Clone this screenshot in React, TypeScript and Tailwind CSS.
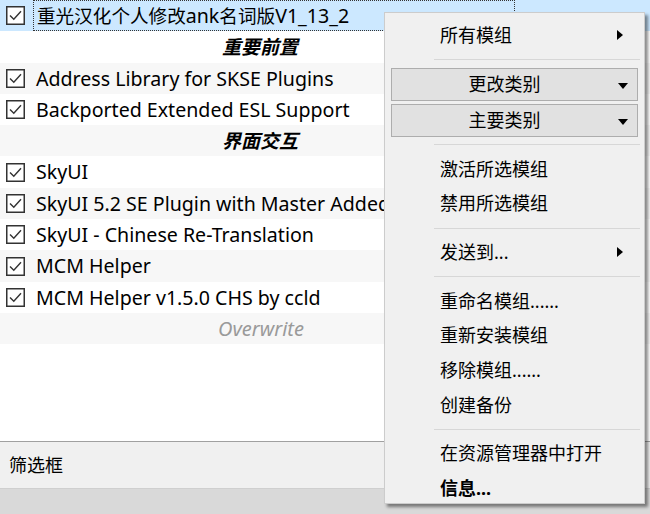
import React from "react";

type Row =
  | { kind: "mod"; name: React.ReactNode; selected?: boolean }
  | { kind: "group"; name: string }
  | { kind: "overwrite"; name: string };

const rows: Row[] = [
  {
    kind: "mod",
    name: (
      <>
        <span className="text-[18.6px]">重光汉化个人修改</span>ank<span className="text-[18.6px]">名词版</span>V1_13_2
      </>
    ),
    selected: true,
  },
  { kind: "group", name: "重要前置" },
  { kind: "mod", name: "Address Library for SKSE Plugins" },
  { kind: "mod", name: "Backported Extended ESL Support" },
  { kind: "group", name: "界面交互" },
  { kind: "mod", name: "SkyUI" },
  { kind: "mod", name: "SkyUI 5.2 SE Plugin with Master Added" },
  { kind: "mod", name: "SkyUI - Chinese Re-Translation" },
  { kind: "mod", name: "MCM Helper" },
  { kind: "mod", name: "MCM Helper v1.5.0 CHS by ccld" },
  { kind: "overwrite", name: "Overwrite" },
];

function CheckBox() {
  return (
    <svg width="19" height="19" viewBox="0 0 19 19" className="shrink-0">
      <rect x="0.75" y="0.75" width="17.5" height="17.5" fill="white" stroke="#333" strokeWidth="1.5" />
      <path d="M4 9.5 L7.8 13.3 L15 5.2" fill="none" stroke="#333" strokeWidth="1.4" />
    </svg>
  );
}

function ArrowRight() {
  return (
    <svg width="6" height="10" viewBox="0 0 6 10">
      <path d="M0 0 L6 5 L0 10 Z" fill="#000" />
    </svg>
  );
}

function ArrowDown() {
  return (
    <svg width="10" height="6" viewBox="0 0 10 6">
      <path d="M0 0 L10 0 L5 6 Z" fill="#000" />
    </svg>
  );
}

function Separator() {
  return (
    <div className="h-[14px] flex items-center pl-[49px] pr-[4px]">
      <div className="h-px w-full bg-[#d7d7d7]" />
    </div>
  );
}

function MenuItem({ label, sub, bold }: { label: string; sub?: boolean; bold?: boolean }) {
  return (
    <div className="h-[34.7px] flex items-center pl-[55px] pr-[21px]">
      <span className={bold ? "flex-1 font-bold" : "flex-1"}>{label}</span>
      {sub && <ArrowRight />}
    </div>
  );
}

function MenuCombo({ label }: { label: string }) {
  return (
    <div className="h-[33px] mx-[6px] flex items-center relative bg-[#e1e1e1] border border-[#adadad] pr-[20px]">
      <span className="flex-1 text-center">{label}</span>
      <div className="absolute right-[9px] top-[14px]">
        <ArrowDown />
      </div>
    </div>
  );
}

export default function App() {
  return (
    <div className="relative w-[650px] h-[514px] overflow-hidden bg-white text-[18px] text-black font-['Noto_Sans','Noto_Sans_CJK_SC',sans-serif]">
      <div className="flex flex-col h-full">
        {/* mod list */}
        <div className="h-[441px] bg-white">
          {rows.map((row, i) => {
            const stripe = row.kind === "mod" && row.selected ? "bg-[#cce8ff]" : i % 2 === 0 ? "bg-[#f7f7f7]" : "bg-white";
            return (
              <div key={i} className={`h-[31.3px] flex items-center ${stripe}`}>
                {row.kind === "mod" && (
                  <>
                    <div className="w-[33px] pl-[6px] flex items-center">
                      <CheckBox />
                    </div>
                    <div
                      className={`w-[482px] h-full flex items-center pl-[3px] text-[19.6px] whitespace-nowrap overflow-hidden ${
                        row.selected ? "border border-dotted border-[#333]" : ""
                      }`}
                    >
                      {row.name}
                    </div>
                  </>
                )}
                {row.kind === "group" && (
                  <div className="w-[520px] text-center text-[19px] font-bold italic">{row.name}</div>
                )}
                {row.kind === "overwrite" && (
                  <div className="w-[522px] text-center text-[20px] italic text-[#9a9a9a]">{row.name}</div>
                )}
              </div>
            );
          })}
        </div>
        {/* filter bar */}
        <div className="h-[48px] border-t border-[#a0a0a0] bg-[#f0f0f0] flex items-center pl-[9px] border-b border-b-[#cfcfcf]">
          筛选框
        </div>
        <div className="flex-1 bg-[#d9d9d9]" />
      </div>

      {/* context menu */}
      <div className="absolute left-[384px] top-[12px] w-[261px] h-[492px] bg-[#f0f0f0] border border-[#cccccc] shadow-[3px_3px_3px_rgba(0,0,0,0.45)] pt-[5px]">
        <MenuItem label="所有模组" sub />
        <Separator />
        <div className="flex flex-col gap-[3px] pt-[1px]">
          <MenuCombo label="更改类别" />
          <MenuCombo label="主要类别" />
        </div>
        <div className="pt-[1px]">
          <Separator />
        </div>
        <MenuItem label="激活所选模组" />
        <MenuItem label="禁用所选模组" />
        <Separator />
        <MenuItem label="发送到..." sub />
        <Separator />
        <MenuItem label="重命名模组......" />
        <MenuItem label="重新安装模组" />
        <MenuItem label="移除模组......" />
        <MenuItem label="创建备份" />
        <Separator />
        <MenuItem label="在资源管理器中打开" />
        <MenuItem label="信息..." bold />
      </div>
    </div>
  );
}
